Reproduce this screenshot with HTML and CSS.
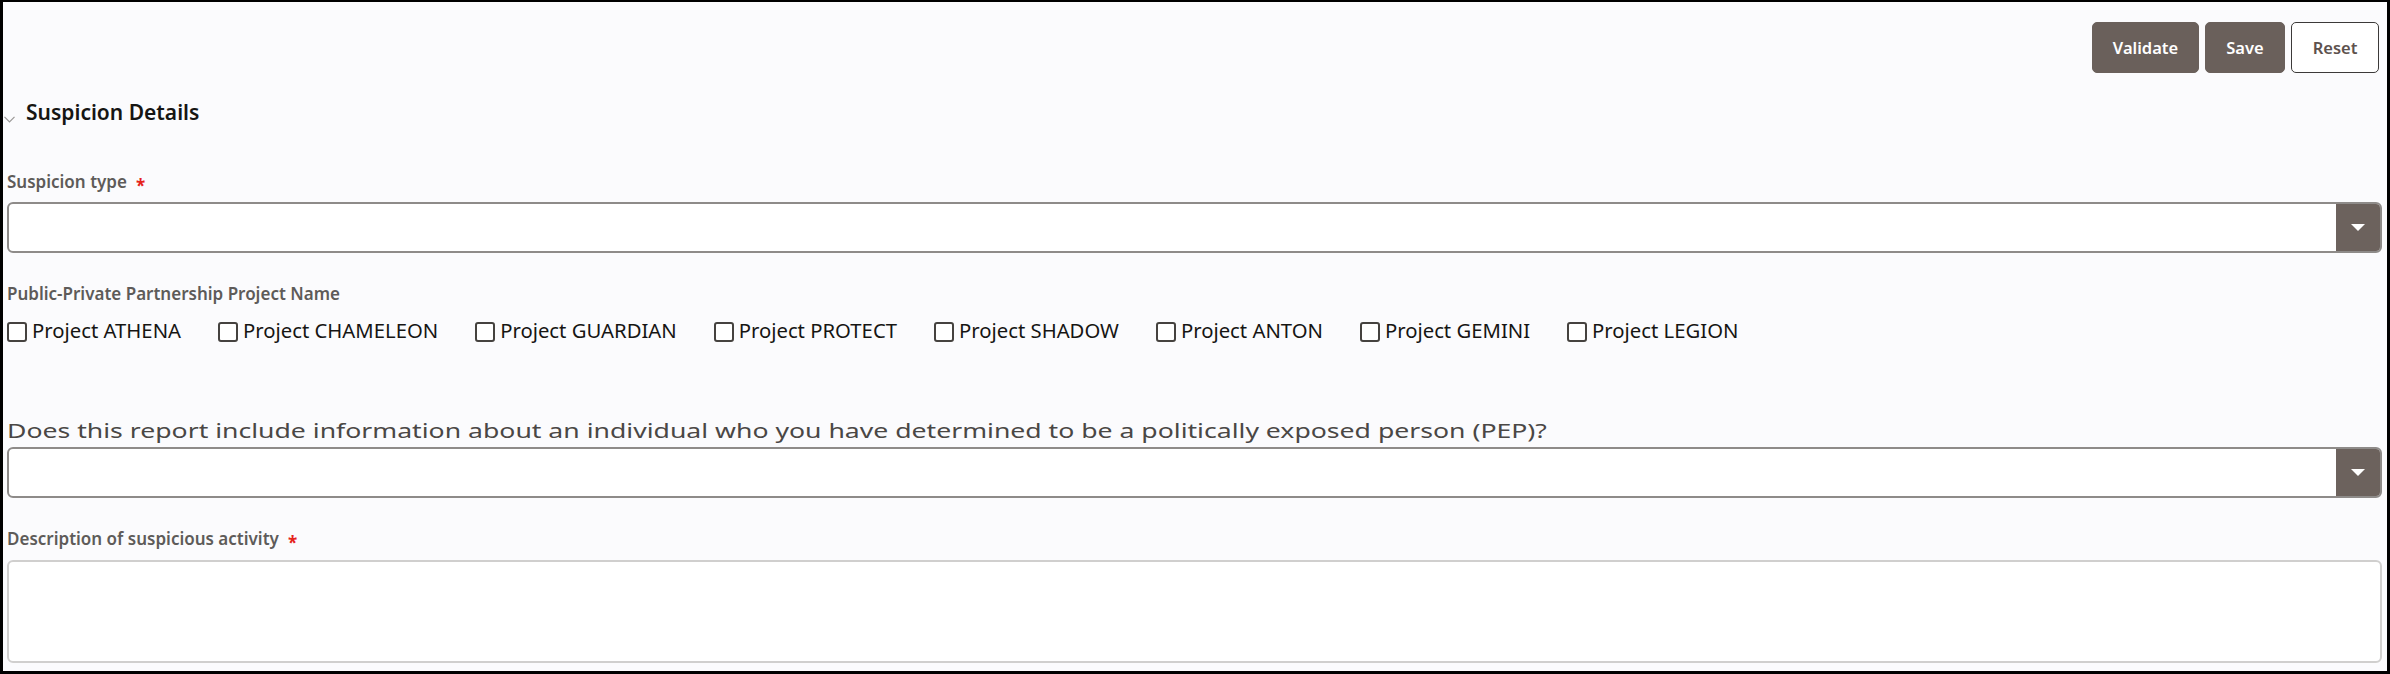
FILE: index.html
```html
<!DOCTYPE html>
<html lang="en">
<head>
<meta charset="utf-8">
<title>Suspicion Details</title>
<link rel="stylesheet" href="styles.css">
</head>
<body>
<div class="frame">
  <div class="toolbar">
    <button class="btn btn-solid btn-validate">Validate</button>
    <button class="btn btn-solid btn-save">Save</button>
    <button class="btn btn-outline btn-reset">Reset</button>
  </div>

  <div class="section-head">
    <svg class="chevron" width="11" height="7" viewBox="0 0 11 7"><path d="M0.5 0.8 L5.5 6 L10.5 0.8" fill="none" stroke="#9a9896" stroke-width="1.2"/></svg>
    <span class="section-title">Suspicion Details</span>
  </div>

  <div class="label label-first">Suspicion type<span class="req">*</span></div>
  <div class="select">
    <div class="select-value"></div>
    <div class="select-btn"><svg width="14" height="7" viewBox="0 0 14 7"><path d="M0 0 H14 L7 7 Z" fill="#ffffff"/></svg></div>
  </div>

  <div class="label label-gap">Public-Private Partnership Project Name</div>
  <div class="checks">
    <label class="check"><span class="box"></span><span class="check-text">Project ATHENA</span></label>
    <label class="check"><span class="box"></span><span class="check-text">Project CHAMELEON</span></label>
    <label class="check"><span class="box"></span><span class="check-text">Project GUARDIAN</span></label>
    <label class="check"><span class="box"></span><span class="check-text">Project PROTECT</span></label>
    <label class="check"><span class="box"></span><span class="check-text">Project SHADOW</span></label>
    <label class="check"><span class="box"></span><span class="check-text">Project ANTON</span></label>
    <label class="check"><span class="box"></span><span class="check-text">Project GEMINI</span></label>
    <label class="check"><span class="box"></span><span class="check-text">Project LEGION</span></label>
  </div>

  <div class="label label-pep"><span class="pep-text">Does this report include information about an individual who you have determined to be a politically exposed person (PEP)?</span></div>
  <div class="select select-pep">
    <div class="select-value"></div>
    <div class="select-btn"><svg width="14" height="7" viewBox="0 0 14 7"><path d="M0 0 H14 L7 7 Z" fill="#ffffff"/></svg></div>
  </div>

  <div class="label label-gap2">Description of suspicious activity<span class="req">*</span></div>
  <div class="textarea"></div>
</div>
</body>
</html>
```
FILE: styles.css
```css
html, body {
  margin: 0;
  padding: 0;
  background: #ffffff;
}

body {
  font-family: "Noto Sans", "Open Sans", "Liberation Sans", sans-serif;
}

.frame {
  width: 2390px;
  height: 674px;
  box-sizing: border-box;
  border: 3px solid #000000;
  border-top-width: 2px;
  background: #fbfbfd;
  padding: 0 5px 0 4px;
  display: flex;
  flex-direction: column;
}

.toolbar {
  display: flex;
  justify-content: flex-end;
  gap: 6px;
  margin-top: 20px;
  padding-right: 3px;
}

.btn {
  height: 51px;
  border-radius: 5px;
  font-family: "Noto Sans", "Open Sans", sans-serif;
  font-size: 16.5px;
  font-weight: 600;
  padding: 0;
  box-sizing: border-box;
  cursor: pointer;
}

.btn-validate { width: 107px; }
.btn-save { width: 80px; }
.btn-reset { width: 88px; }

.btn-solid {
  background: #6a605b;
  color: #ffffff;
  border: 1px solid #6a605b;
}

.btn-outline {
  background: #ffffff;
  color: #5d524e;
  border: 1.5px solid #3c3a39;
}

.section-head {
  display: flex;
  align-items: flex-start;
  height: 30px;
  margin-top: 24px;
}

.chevron {
  align-self: flex-end;
  margin: 0 11px 4px -3px;
}

.section-title {
  font-size: 21px;
  line-height: 30px;
  font-weight: 600;
  color: #161513;
}

.label {
  font-size: 17px;
  line-height: 24px;
  height: 24px;
  font-weight: 600;
  color: #5e5b59;
  white-space: nowrap;
}

.label-first { margin-top: 43px; }
.label-gap { margin-top: 29px; }
.label-pep { margin-top: 77px; }
.label-gap2 { margin-top: 29px; }

.pep-text {
  display: inline-block;
  font-size: 20px;
  font-weight: 400;
  color: #4a4745;
  transform: scaleX(1.33);
  transform-origin: left center;
}

.req {
  color: #e5231b;
  font-weight: 700;
  margin-left: 9px;
  line-height: 0;
  vertical-align: -4px;
}

.select {
  margin-top: 8px;
  height: 51px;
  box-sizing: border-box;
  border: 2px solid #8e8b89;
  border-radius: 6px;
  background: #ffffff;
  display: flex;
  overflow: hidden;
}

.select-pep {
  margin-top: 4px;
}

.select-value {
  flex: 1;
}

.select-btn {
  width: 44px;
  background: #6c625d;
  display: flex;
  align-items: center;
  justify-content: center;
}

.checks {
  display: flex;
  gap: 37px;
  margin-top: 12px;
  height: 24px;
}

.check {
  display: flex;
  align-items: flex-start;
  gap: 5px;
}

.box {
  width: 20px;
  height: 20px;
  box-sizing: border-box;
  border: 2px solid #45423f;
  border-radius: 3px;
  background: #ffffff;
  margin-top: 4px;
}

.check-text {
  font-size: 20.3px;
  line-height: 24px;
  color: #161513;
  white-space: nowrap;
}

.textarea {
  margin-top: 9px;
  height: 103px;
  box-sizing: border-box;
  border: 2px solid #d0cfce;
  border-radius: 6px;
  background: #ffffff;
}
```
